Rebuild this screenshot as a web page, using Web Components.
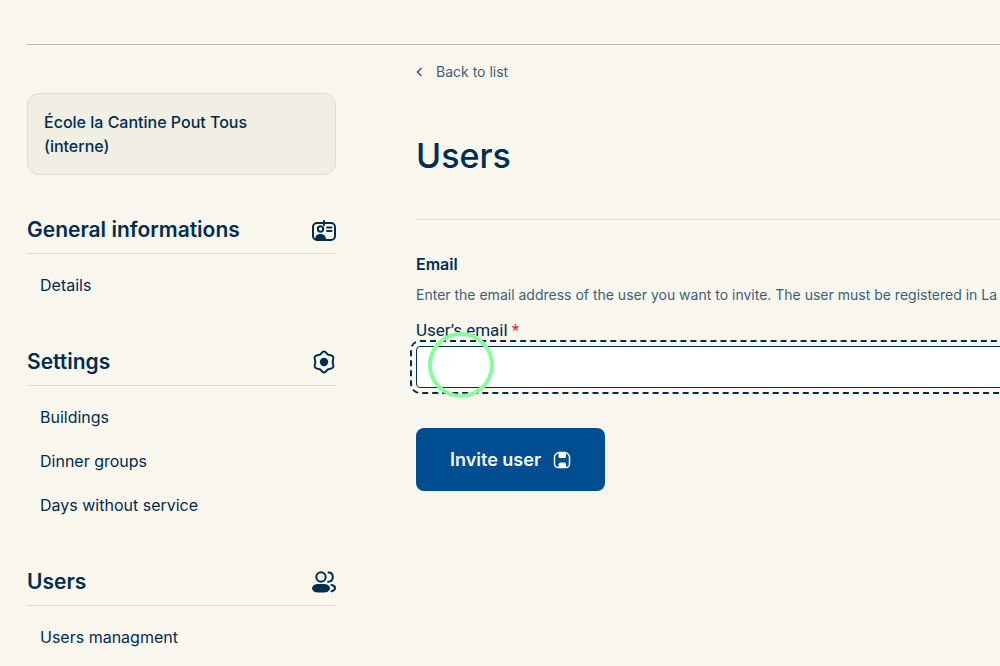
<!DOCTYPE html>
<html lang="en">
<head>
<meta charset="utf-8">
<meta name="viewport" content="width=device-width, initial-scale=1">
<title>Users</title>
<style>
body{
    margin: 0;
    background: #F9F6EE;
    color: #002D50;
    font-family: Inter, "Noto Sans", sans-serif;
    font-size: 16px;
    line-height: 24px;
    overflow-x: hidden;
}
</style>
</head>
<body>
<admin-page>
    <side-menu slot="side" school="École la Cantine Pout Tous (interne)">
        <menu-section heading="General informations" icon="card">
            <menu-link>Details</menu-link>
        </menu-section>
        <menu-section heading="Settings" icon="gear">
            <menu-link>Buildings</menu-link>
            <menu-link>Dinner groups</menu-link>
            <menu-link>Days without service</menu-link>
        </menu-section>
        <menu-section heading="Users" icon="users">
            <menu-link>Users managment</menu-link>
        </menu-section>
    </side-menu>
    <page-title heading="Users">Back to list</page-title>
    <invite-form></invite-form>
</admin-page>

<script>
const icons = {
    card: `<svg viewBox="0 0 24 24" width="24" height="24" aria-hidden="true">
        <rect x="1" y="5" width="22" height="17" rx="4" fill="none" stroke="currentColor" stroke-width="2"/>
        <path d="M12 3v4" stroke="currentColor" stroke-width="2" stroke-linecap="round"/>
        <circle cx="8.5" cy="11" r="2.7" fill="none" stroke="currentColor" stroke-width="2"/>
        <path d="M3 22c0-4 2-6 5.500-6s5.500 2 5.500 6z" fill="currentColor"/>
        <path d="M15 9.500h4.500M15 13h4.500" stroke="currentColor" stroke-width="1.800" stroke-linecap="round"/>
    </svg>`,
    gear: `<svg viewBox="0 0 24 24" width="24" height="24" aria-hidden="true">
        <path d="M12 1.500C14 1.500 14.700 3.900 16 4.600C17.300 5.300 20 4.800 21.100 6.700C22.100 8.500 20.600 10.500 20.600 12C20.600 13.500 22.100 15.500 21.100 17.300C20 19.200 17.300 18.700 16 19.400C14.700 20.100 14 22.500 12 22.500C10 22.500 9.300 20.100 8 19.400C6.700 18.700 4 19.200 2.900 17.300C1.900 15.500 3.400 13.500 3.400 12C3.400 10.500 1.900 8.500 2.900 6.700C4 4.800 6.700 5.300 8 4.600C9.300 3.900 10 1.500 12 1.500z" fill="none" stroke="currentColor" stroke-width="2"/>
        <circle cx="12" cy="12" r="4.200" fill="currentColor"/>
    </svg>`,
    users: `<svg viewBox="0 0 24 24" width="24" height="24" aria-hidden="true">
        <circle cx="9" cy="7" r="4.700" fill="none" stroke="currentColor" stroke-width="2"/>
        <rect x="0" y="14" width="18" height="8.500" rx="6" ry="4.250" fill="currentColor"/>
        <path d="M16.500 2.500c2.700 0 4.300 2 4.300 4.500s-1.600 4.700-4.700 4.700M19.500 15c2 .3 3.500 1.500 3.500 3s-1 2.700-3.500 3.300" fill="none" stroke="currentColor" stroke-width="2" stroke-linecap="round"/>
    </svg>`
};

class AdminPage extends HTMLElement {
    constructor() {
        super();
        this.attachShadow({mode: 'open'}).innerHTML = `
<style>
:host{
    display: block;
    padding-left: 27px;
    overflow: hidden;
}

header{
    height: 44px;
    border-bottom: 1px solid #BDB9B7;
}

#layout{
    display: grid;
    grid-template-columns: 309px minmax(0, 1fr);
    gap: 80px;
}
</style>

<header></header>
<div id="layout">
    <slot name="side"></slot>
    <main><slot></slot></main>
</div>`;
    }
}

class SideMenu extends HTMLElement {
    connectedCallback() {
        this.attachShadow({mode: 'open'}).innerHTML = `
<style>
:host{
    display: block;
    padding-top: 48px;
}

#school{
    margin: 0;
    padding: 16px 40px 16px 16px;
    border: 1px solid #DFDBD1;
    border-radius: 12px;
    background: #F1EEE3;
    font-weight: 500;
}
</style>

<p id="school">${this.getAttribute('school')}</p>
<nav><slot></slot></nav>`;
    }
}

class MenuSection extends HTMLElement {
    connectedCallback() {
        this.attachShadow({mode: 'open'}).innerHTML = `
<style>
:host{
    display: block;
    margin-top: 43px;
}

h2{
    display: flex;
    justify-content: space-between;
    align-items: center;
    margin: 0 0 9px;
    padding-bottom: 11px;
    border-bottom: 1px solid #DFDBD3;
    font-size: 21px;
    line-height: 24px;
    font-weight: 600;
}
</style>

<h2>${this.getAttribute('heading')}${icons[this.getAttribute('icon')]}</h2>
<slot></slot>`;
    }
}

class MenuLink extends HTMLElement {
    constructor() {
        super();
        this.attachShadow({mode: 'open'}).innerHTML = `
<style>
:host{
    display: block;
}

a{
    display: block;
    padding: 10px 13px;
    color: inherit;
    text-decoration: none;
}
</style>

<a href="#"><slot></slot></a>`;
    }
}

class PageTitle extends HTMLElement {
    connectedCallback() {
        this.attachShadow({mode: 'open'}).innerHTML = `
<style>
:host{
    display: block;
    padding-top: 14px;
    border-bottom: 1px solid #DFDBD3;
}

a{
    display: inline-flex;
    align-items: center;
    gap: 12px;
    color: #3F5F78;
    font-size: 14px;
    text-decoration: none;
}

h1{
    margin: 48px 0 40px;
    font-size: 34px;
    line-height: 47px;
    font-weight: 500;
}
</style>

<a href="#"><svg viewBox="0 0 8 10" width="8" height="10" aria-hidden="true"><path d="M5.500 1L1.500 5l4 4" fill="none" stroke="currentColor" stroke-width="1.600"/></svg><slot></slot></a>
<h1>${this.getAttribute('heading')}</h1>`;
    }
}

class InviteForm extends HTMLElement {
    constructor() {
        super();
        this.attachShadow({mode: 'open'}).innerHTML = `
<style>
:host{
    display: block;
    padding-top: 32px;
}

h3{
    margin: 0;
    font-size: 16px;
    line-height: 24px;
    font-weight: 600;
}

#help{
    margin: 7px 0 11px;
    color: #3F5F78;
    font-size: 14px;
    white-space: nowrap;
}

label{
    display: block;
    font-family: Roboto, sans-serif;
    font-size: 17px;
    line-height: 24px;
}

label span{
    color: #E3262E;
}

#field{
    position: relative;
    margin: 4px -8px 0 0;
}

input{
    display: block;
    box-sizing: border-box;
    width: 100%;
    height: 42px;
    padding: 0 12px;
    border: 1px solid #002D50;
    border-radius: 4px;
    background: white;
    color: inherit;
    font: inherit;
    outline: 2px dashed #002D50;
    outline-offset: 4px;
}

#pointer{
    position: absolute;
    left: 12px;
    top: -14px;
    box-sizing: border-box;
    width: 66px;
    height: 66px;
    border: 4px solid #85FC9F;
    border-radius: 50%;
    pointer-events: none;
}

button{
    display: flex;
    align-items: center;
    gap: 12px;
    margin-top: 40px;
    padding: 19px 34px;
    border: none;
    border-radius: 8px;
    background: #004E92;
    color: #F9F6EE;
    font: inherit;
    font-size: 18px;
    line-height: 25px;
    font-weight: 600;
    cursor: pointer;
}
</style>

<form>
    <h3>Email</h3>
    <p id="help">Enter the email address of the user you want to invite. The user must be registered in La</p>
    <label for="email">User’s email <span>*</span></label>
    <div id="field">
        <input type="email" id="email" required aria-describedby="help">
        <div id="pointer"></div>
    </div>
    <button type="submit">Invite user
        <svg viewBox="0 0 18 18" width="18" height="18" aria-hidden="true">
            <path d="M6 1.500h6c2 0 4.500 2.500 4.500 4.500v7a3.500 3.500 0 0 1-3.500 3.500H5A3.500 3.500 0 0 1 1.500 13V6C1.500 4 4 1.500 6 1.500z" fill="none" stroke="currentColor" stroke-width="1.500"/>
            <path d="M5.500 1h7.500v4.500a1.500 1.500 0 0 1-1.500 1.500H7a1.500 1.500 0 0 1-1.500-1.500zM5.500 17v-3.500a2 2 0 0 1 2-2H11a2 2 0 0 1 2 2V17z" fill="currentColor"/>
        </svg>
    </button>
</form>`;
    }
}

window.customElements.define('admin-page', AdminPage);
window.customElements.define('side-menu', SideMenu);
window.customElements.define('menu-section', MenuSection);
window.customElements.define('menu-link', MenuLink);
window.customElements.define('page-title', PageTitle);
window.customElements.define('invite-form', InviteForm);
</script>
</body>
</html>
